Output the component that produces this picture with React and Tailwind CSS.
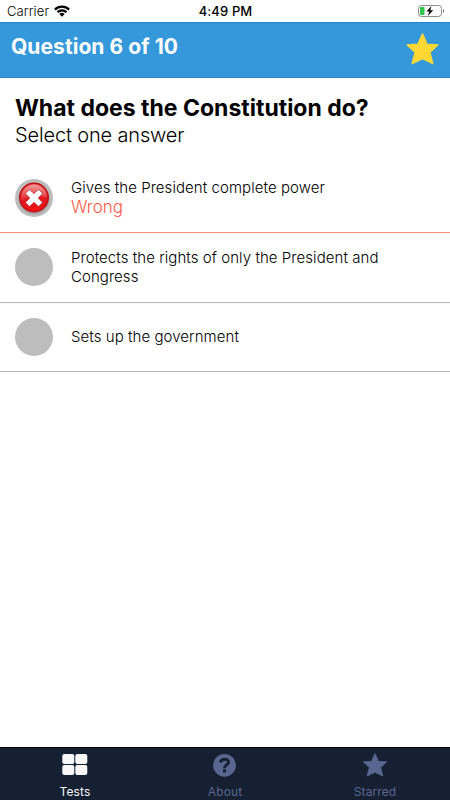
import React from 'react'

const STAR = 'M16.5 0.8L21.2 11.2L32 11.8L24 19.4L26.9 30.7L16.5 25.6L6.1 30.7L9 19.4L1 11.8L11.8 11.2Z'

const answers = [
  { text: 'Gives the President complete power', wrong: true },
  { text: 'Protects the rights of only the President and Congress' },
  { text: 'Sets up the government' }
]

function StatusBar(){
  return (
    <div className="h-[22px] shrink-0 grid grid-cols-3 items-center pl-[7px] pr-[6px] text-[13px] leading-[22px] text-black">
      <div className="flex items-center gap-[5px]">
        <span className="font-light tracking-[0.1px]">Carrier</span>
        <svg className="w-4 h-3" viewBox="0 0 16 12">
          <g fill="none" stroke="#000" strokeWidth="2.3">
            <path d="M0.9 4.6A10.1 10.1 0 0 1 15.1 4.6" />
            <path d="M3.5 7.3A6.4 6.4 0 0 1 12.5 7.3" />
          </g>
          <path d="M5.3 9.1A3.8 3.8 0 0 1 10.7 9.1L8 11.8Z" />
        </svg>
      </div>
      <div className="text-center font-medium tracking-[0.12px] whitespace-nowrap">4:49 PM</div>
      <svg className="w-[27px] h-3 justify-self-end translate-x-px" viewBox="0 0 27 12">
        <rect x="0.5" y="0.5" width="23" height="11" rx="3" fill="#fff" stroke="#8a8a8a" />
        <path d="M25 4v4c1.5-.5 1.5-3.5 0-4z" fill="#777" />
        <rect x="2" y="2" width="4.5" height="8" rx="1" fill="#2cc94a" />
        <path d="M13.5 1L8.500 6.6H11.300L9.800 11L15.200 5.300H12.300Z" fill="#000" stroke="#fff" strokeWidth="1.8" paintOrder="stroke" />
      </svg>
    </div>
  )
}

function WrongMark(){
  return (
    <svg className="w-[38px] h-[38px]" viewBox="0 0 38 38">
      <defs>
        <linearGradient id="ball" x1="0" y1="0" x2="0" y2="1">
          <stop offset="0" stopColor="#ee6666" />
          <stop offset="0.5" stopColor="#df1820" />
          <stop offset="1" stopColor="#f01318" />
        </linearGradient>
        <linearGradient id="gloss" x1="0" y1="0" x2="0" y2="1">
          <stop offset="0" stopColor="#fff" stopOpacity="0.35" />
          <stop offset="1" stopColor="#fff" stopOpacity="0.08" />
        </linearGradient>
      </defs>
      <circle cx="19" cy="19" r="19" fill="#bdbdbd" />
      <circle cx="19" cy="19.8" r="15.6" fill="#a3a3a3" />
      <circle cx="19" cy="18.5" r="14.2" fill="url(#ball)" stroke="#c20d13" strokeWidth="1.5" />
      <path d="M5.8 19a13.2 13.2 0 0 1 26.4 0c-7-3.5-17-3-26.4 3z" fill="url(#gloss)" />
      <path d="M14.5 10.5L19 14.7L23.5 10.5L27.5 14.5L23.2 19L27.5 23.5L23.5 27.5L19 23.3L14.5 27.5L10.5 23.5L14.8 19L10.5 14.5Z" fill="#fff" stroke="#b51218" strokeWidth="0.5" strokeLinejoin="round" />
    </svg>
  )
}

function Answer({ text, wrong }){
  return (
    <li className={`h-[69.7px] flex items-center pl-[15px] pr-10 border-b ${wrong ? 'border-[#ff8a7c]' : 'border-[#b4b4b8]'}`}>
      <div className="w-[38px] shrink-0">
        {wrong ? <WrongMark /> : <div className="w-[38px] h-[38px] rounded-full bg-[#bdbdbd]" />}
      </div>
      <div className="ml-[18px]">
        <div className="text-[15px] leading-[19px] tracking-[0.06px] font-[350] text-black">{text}</div>
        {wrong && <div className="text-[17px] leading-[21px] tracking-[-0.02px] font-[350] text-[#ff5a48]">Wrong</div>}
      </div>
    </li>
  )
}

function Tab({ label, active, children }){
  return (
    <div className={`flex flex-col items-center pt-[5px] ${active ? 'text-[#f7f7f7]' : 'text-[#5a668f]'}`}>
      {children}
      <span className="mt-[7px] text-[12px] leading-4 tracking-[0.1px]">{label}</span>
    </div>
  )
}

export default function App(){
  return (
    <div className="w-full h-screen flex flex-col bg-white overflow-hidden font-['Inter',sans-serif]">
      <StatusBar />

      <header className="h-14 shrink-0 flex items-start justify-between pl-[11px] pr-[11px] bg-[#3498db] border-y border-[#1f86cd]">
        <h1 className="pt-[10px] text-[21px] leading-7 tracking-[0.06px] font-bold text-white">Question 6 of 10</h1>
        <svg className="mt-[10px] w-[33px] h-8" viewBox="0 0 33 32">
          <path d={STAR} fill="#fdd835" stroke="#fdd835" strokeWidth="1.2" strokeLinejoin="round" />
        </svg>
      </header>

      <main className="flex-1">
        <div className="h-[85.2px] pt-4 pl-[15px]">
          <h2 className="text-[23px] leading-7 font-bold text-black">What does the Constitution do?</h2>
          <p className="text-[20px] leading-[26px] tracking-[-0.15px] font-light text-black">Select one answer</p>
        </div>
        <ul>
          {answers.map(a => <Answer key={a.text} {...a} />)}
        </ul>
      </main>

      <nav className="h-[53px] shrink-0 grid grid-cols-3 bg-[#162033] border-t border-black">
        <Tab label="Tests" active>
          <svg className="w-[26px] h-6" viewBox="0 0 26 24" fill="currentColor">
            <rect x="0.3" y="1" width="12" height="10" rx="2" />
            <rect x="13.3" y="1" width="12" height="10" rx="2" />
            <rect x="0.3" y="12" width="12" height="10" rx="2" />
            <rect x="13.3" y="12" width="12" height="10" rx="2" />
          </svg>
        </Tab>
        <Tab label="About">
          <svg className="w-6 h-6" viewBox="0 0 24 24">
            <circle cx="11.5" cy="12.3" r="11.4" fill="currentColor" />
            <path d="M7.5 9.5C8.2 5 16 5 15.4 9.5C15.1 12 11.5 12 11.5 15.2" fill="none" stroke="#162033" strokeWidth="3" />
            <rect x="9.9" y="16.3" width="3.2" height="3.2" rx="0.8" fill="#162033" />
          </svg>
        </Tab>
        <Tab label="Starred">
          <svg className="w-6 h-6" viewBox="0.500 0 32 32">
            <path d={STAR} fill="currentColor" stroke="currentColor" strokeWidth="1.2" strokeLinejoin="round" />
          </svg>
        </Tab>
      </nav>
    </div>
  )
}
